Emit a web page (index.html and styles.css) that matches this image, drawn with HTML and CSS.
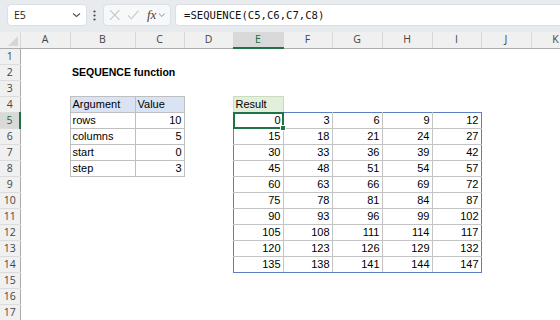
FILE: index.html
```html
<!DOCTYPE html>
<html lang="en">
<head>
    <meta charset="UTF-8">
    <title>SEQUENCE function</title>
    <link rel="stylesheet" href="styles.css">
</head>
<body>
    <div class="formula-bar">
        <div class="name-box">
            <span>E5</span>
            <svg class="chevron" width="9" height="6" viewBox="0 0 9 6"><path d="M1 1.5 L4.5 4.5 L8 1.5" fill="none" stroke="#555" stroke-width="1.2"/></svg>
        </div>
        <svg class="grip" width="3" height="11" viewBox="0 0 3 11"><circle cx="1.5" cy="1.5" r="1.1" fill="#444"/><circle cx="1.5" cy="5.5" r="1.1" fill="#444"/><circle cx="1.5" cy="9.5" r="1.1" fill="#444"/></svg>
        <div class="fx-box">
            <svg width="12" height="12" viewBox="0 0 12 12"><path d="M1 1 L11 11 M11 1 L1 11" stroke="#c4c4c4" stroke-width="1.1"/></svg>
            <svg width="13" height="12" viewBox="0 0 13 12"><path d="M1 6.5 L4.5 10 L12 1.5" fill="none" stroke="#c4c4c4" stroke-width="1.1"/></svg>
            <span class="fx">fx</span>
            <svg width="8" height="6" viewBox="0 0 8 6"><path d="M1 1.5 L4 4.5 L7 1.5" fill="none" stroke="#888" stroke-width="1"/></svg>
        </div>
        <div class="formula">=SEQUENCE(C5,C6,C7,C8)</div>
    </div>

    <table class="sheet">
        <colgroup>
            <col class="c-row">
            <col style="width:50px"><col style="width:65px"><col style="width:49px"><col style="width:49px">
            <col style="width:50px"><col style="width:49px"><col style="width:50px"><col style="width:50px">
            <col style="width:49px"><col style="width:50px"><col style="width:49px">
        </colgroup>
        <tr class="col-heads">
            <th class="corner"></th>
            <th>A</th><th>B</th><th>C</th><th>D</th><th class="active">E</th>
            <th>F</th><th>G</th><th>H</th><th>I</th><th>J</th><th>K</th>
        </tr>
        <tr><th class="rh">1</th><td></td><td></td><td></td><td></td><td></td><td></td><td></td><td></td><td></td><td></td><td></td></tr>
        <tr><th class="rh">2</th><td></td><td class="title">SEQUENCE function</td><td></td><td></td><td></td><td></td><td></td><td></td><td></td><td></td><td></td></tr>
        <tr><th class="rh">3</th><td></td><td></td><td></td><td></td><td></td><td></td><td></td><td></td><td></td><td></td><td></td></tr>
        <tr>
            <th class="rh">4</th><td></td>
            <td class="arg arg-head">Argument</td><td class="arg arg-head">Value</td><td></td>
            <td class="res-head">Result</td>
            <td></td><td></td><td></td><td></td><td></td><td></td>
        </tr>
        <tr>
            <th class="rh active">5</th><td></td>
            <td class="arg">rows</td><td class="arg num">10</td><td></td>
            <td class="res num edge-l selected">0</td><td class="res num edge-t">3</td><td class="res num edge-t">6</td><td class="res num edge-t">9</td><td class="res num edge-t edge-r">12</td>
            <td></td><td></td>
        </tr>
        <tr>
            <th class="rh">6</th><td></td>
            <td class="arg">columns</td><td class="arg num">5</td><td></td>
            <td class="res num edge-l">15</td><td class="res num">18</td><td class="res num">21</td><td class="res num">24</td><td class="res num edge-r">27</td>
            <td></td><td></td>
        </tr>
        <tr>
            <th class="rh">7</th><td></td>
            <td class="arg">start</td><td class="arg num">0</td><td></td>
            <td class="res num edge-l">30</td><td class="res num">33</td><td class="res num">36</td><td class="res num">39</td><td class="res num edge-r">42</td>
            <td></td><td></td>
        </tr>
        <tr>
            <th class="rh">8</th><td></td>
            <td class="arg">step</td><td class="arg num">3</td><td></td>
            <td class="res num edge-l">45</td><td class="res num">48</td><td class="res num">51</td><td class="res num">54</td><td class="res num edge-r">57</td>
            <td></td><td></td>
        </tr>
        <tr>
            <th class="rh">9</th><td></td><td></td><td></td><td></td>
            <td class="res num edge-l">60</td><td class="res num">63</td><td class="res num">66</td><td class="res num">69</td><td class="res num edge-r">72</td>
            <td></td><td></td>
        </tr>
        <tr>
            <th class="rh">10</th><td></td><td></td><td></td><td></td>
            <td class="res num edge-l">75</td><td class="res num">78</td><td class="res num">81</td><td class="res num">84</td><td class="res num edge-r">87</td>
            <td></td><td></td>
        </tr>
        <tr>
            <th class="rh">11</th><td></td><td></td><td></td><td></td>
            <td class="res num edge-l">90</td><td class="res num">93</td><td class="res num">96</td><td class="res num">99</td><td class="res num edge-r">102</td>
            <td></td><td></td>
        </tr>
        <tr>
            <th class="rh">12</th><td></td><td></td><td></td><td></td>
            <td class="res num edge-l">105</td><td class="res num">108</td><td class="res num">111</td><td class="res num">114</td><td class="res num edge-r">117</td>
            <td></td><td></td>
        </tr>
        <tr>
            <th class="rh">13</th><td></td><td></td><td></td><td></td>
            <td class="res num edge-l">120</td><td class="res num">123</td><td class="res num">126</td><td class="res num">129</td><td class="res num edge-r">132</td>
            <td></td><td></td>
        </tr>
        <tr>
            <th class="rh">14</th><td></td><td></td><td></td><td></td>
            <td class="res num edge-l edge-b">135</td><td class="res num edge-b">138</td><td class="res num edge-b">141</td><td class="res num edge-b">144</td><td class="res num edge-r edge-b">147</td>
            <td></td><td></td>
        </tr>
        <tr><th class="rh">15</th><td></td><td></td><td></td><td></td><td></td><td></td><td></td><td></td><td></td><td></td><td></td></tr>
        <tr><th class="rh">16</th><td></td><td></td><td></td><td></td><td></td><td></td><td></td><td></td><td></td><td></td><td></td></tr>
        <tr><th class="rh">17</th><td></td><td></td><td></td><td></td><td></td><td></td><td></td><td></td><td></td><td></td><td></td></tr>
    </table>
</body>
</html>
```

FILE: styles.css
```css
html, body {
    margin: 0;
    overflow: hidden;
    background: #fff;
}

body {
    width: 560px;
    height: 320px;
    font-family: "Liberation Sans", Arial, sans-serif;
}

/* formula bar */
.formula-bar {
    height: 32px;
    box-sizing: border-box;
    padding: 4px 0 6px 7px;
    background: #e8ebee;
    display: flex;
    align-items: stretch;
}

.name-box {
    width: 80px;
    box-sizing: border-box;
    background: #fff;
    border: 1px solid #dcdfe3;
    border-radius: 4px;
    display: flex;
    align-items: center;
    justify-content: space-between;
    padding: 0 5px 0 6px;
    font-family: "Open Sans", sans-serif;
    font-size: 10.5px;
    color: #222;
}

.grip {
    align-self: center;
    margin: 0 7px 0 6px;
}

.fx-box {
    width: 68px;
    box-sizing: border-box;
    background: #f7f8f9;
    border: 1px solid #dcdfe3;
    border-radius: 4px;
    display: flex;
    align-items: center;
    gap: 6px;
    padding: 0 4px 0 5px;
}

.fx {
    font-family: "Liberation Serif", serif;
    font-style: italic;
    font-size: 13px;
    color: #444;
    margin-left: 2px;
    margin-right: -4px;
}

.formula {
    flex: 1;
    margin-left: 4px;
    background: #fff;
    border: 1px solid #dcdfe3;
    border-right: none;
    border-radius: 4px 0 0 4px;
    padding-left: 8px;
    display: flex;
    align-items: center;
    font-family: "DejaVu Sans Mono", monospace;
    font-size: 10.6px;
    color: #111;
}

/* sheet grid */
.sheet {
    table-layout: fixed;
    width: 580px;
    border-collapse: collapse;
    font-size: 11px;
    color: #000;
}

.c-row {
    width: 20px;
}

.sheet tr {
    height: 16px;
}

.sheet td {
    padding: 0 2px;
    line-height: 13px;
    white-space: nowrap;
    overflow: visible;
}

.col-heads th {
    background: #f0f0f0;
    border-right: 1px solid #d8d8d8;
    border-bottom: 1px solid #acacac;
    font-family: "Open Sans", sans-serif;
    font-weight: normal;
    font-size: 10.5px;
    color: #444;
    padding: 0;
    line-height: 13px;
}

.col-heads th.active {
    background: #d9d9d9;
    border-bottom: 2px solid #217346;
    color: #1d6a3f;
}

.corner {
    position: relative;
}

.corner::after {
    content: "";
    position: absolute;
    right: 2px;
    bottom: 2px;
    border-left: 10px solid transparent;
    border-bottom: 10px solid #d6d6d6;
}

.rh {
    background: #f0f0f0;
    border-right: 1px solid #acacac;
    border-bottom: 1px solid #dcdcdc;
    font-family: "Open Sans", sans-serif;
    font-weight: normal;
    font-size: 10.5px;
    color: #444;
    padding: 0;
    line-height: 13px;
}

.rh.active {
    background: #d9d9d9;
    border-right: 2px solid #217346;
    color: #1d6a3f;
}

.title {
    font-weight: bold;
    font-size: 10.5px;
}

.arg {
    border: 1px solid #bfbfbf;
}

.arg-head {
    background: #dae3f3;
}

.num {
    text-align: right;
}

.res-head {
    background: #e2efda;
    border: 1px solid #c9dcbc;
}

.res {
    border: 1px solid #c4c4c4;
}

.res.edge-l { border-left-color: #5b7fc4; }
.res.edge-r { border-right-color: #5b7fc4; }
.res.edge-t { border-top-color: #5b7fc4; }
.res.edge-b { border-bottom-color: #5b7fc4; }

.selected {
    position: relative;
}

.selected::before {
    content: "";
    position: absolute;
    left: -1px;
    top: -1px;
    right: -1px;
    bottom: -1px;
    border: 2px solid #217346;
}

.selected::after {
    content: "";
    position: absolute;
    right: -3px;
    bottom: -3px;
    width: 4px;
    height: 4px;
    background: #217346;
    border: 1px solid #fff;
}
```
